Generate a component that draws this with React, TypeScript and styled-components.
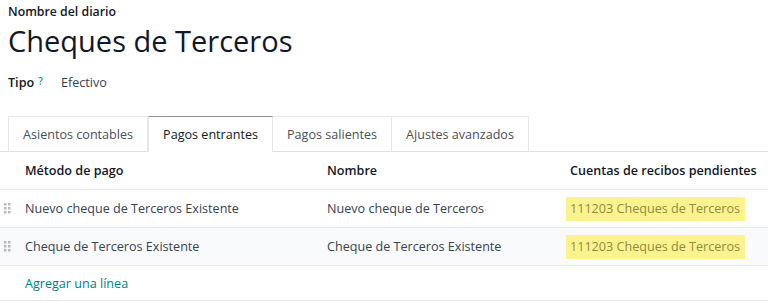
import React from "react";
import styled, { createGlobalStyle } from "styled-components";

const Global = createGlobalStyle`
  html, body { margin: 0; padding: 0; background: #fff; }
  body { font-family: "Open Sans", "Noto Sans", sans-serif; color: #212529; }
`;

const Page = styled.div`
  width: 768px;
  height: 302px;
  overflow: hidden;
  background: #fff;
`;

const Head = styled.div`
  padding: 0 8px;
`;

const FieldLabel = styled.div`
  font-size: 12.3px;
  font-weight: 600;
  color: #111827;
  padding-top: 3px;
  line-height: 18px;
`;

const Title = styled.h1`
  margin: 0;
  font-size: 29px;
  font-weight: 400;
  line-height: 40px;
  color: #111827;
`;

const InfoRow = styled.div`
  display: flex;
  align-items: baseline;
  margin-top: 13px;
  height: 28px;
  font-size: 12.6px;
`;

const InfoLabel = styled.span`
  font-weight: 600;
  color: #111827;
  width: 53px;
  display: inline-flex;
  align-items: flex-start;
`;

const Help = styled.sup`
  color: #0d8fb5;
  font-size: 10px;
  margin-left: 4px;
  font-weight: 600;
`;

const InfoValue = styled.span`
  color: #374151;
`;

const Tabs = styled.div`
  display: flex;
  padding: 0 8px;
  margin-top: 14px;
  border-bottom: 1px solid #dee2e6;
  height: 35px;
`;

const Tab = styled.div<{ $active?: boolean }>`
  display: flex;
  align-items: center;
  padding: 0 14px;
  font-size: 12.6px;
  color: ${(p) => (p.$active ? "#111827" : "#495057")};
  border: 1px solid #e5e7eb;
  border-left-width: ${(p) => (p.$active ? "1px" : "0")};
  border-top-color: ${(p) => (p.$active ? "#9d8598" : "#e5e7eb")};
  border-bottom: none;
  margin-bottom: ${(p) => (p.$active ? "-1px" : "0")};
  background: #fff;
  &:first-child { border-left-width: 1px; }
`;

const Row = styled.div<{ $alt?: boolean; $head?: boolean; $short?: boolean }>`
  display: grid;
  grid-template-columns: 21px 302px 243px 1fr;
  align-items: center;
  height: ${(p) => (p.$short ? "34px" : "37px")};
  border-bottom: 1px solid #e5e7eb;
  background: ${(p) => (p.$alt ? "#f9fafb" : "#fff")};
  font-size: 12.6px;
  font-weight: ${(p) => (p.$head ? 600 : 400)};
  color: ${(p) => (p.$head ? "#111827" : "#374151")};
`;

const Cell = styled.div<{ $pad?: number }>`
  padding-left: ${(p) => p.$pad ?? 4}px;
  white-space: nowrap;
`;

const Handle = styled.div`
  display: flex;
  justify-content: flex-start;
  padding-left: 4px;
`;

const Mark = styled.span`
  background: #fdf38e;
  color: #8e8b43;
  padding: 0 5px 0 4px;
  line-height: 24px;
  height: 24px;
  display: inline-block;
`;

const AddLink = styled.span`
  color: #017e84;
`;

const Grip = () => (
  <svg width="7" height="11" viewBox="0 0 7 11">
    {[0, 4, 8].map((y) =>
      [0, 4].map((x) => (
        <rect key={`${x}-${y}`} x={x} y={y} width="2.5" height="2.5" fill="#b5b9be" />
      ))
    )}
  </svg>
);

const rows = [
  { m: "Nuevo cheque de Terceros Existente", n: "Nuevo cheque de Terceros", c: "111203 Cheques de Terceros" },
  { m: "Cheque de Terceros Existente", n: "Cheque de Terceros Existente", c: "111203 Cheques de Terceros" },
];

export default function App() {
  return (
    <Page>
      <Global />
      <Head>
        <FieldLabel>Nombre del diario</FieldLabel>
        <Title>Cheques de Terceros</Title>
        <InfoRow>
          <InfoLabel>
            Tipo<Help>?</Help>
          </InfoLabel>
          <InfoValue>Efectivo</InfoValue>
        </InfoRow>
      </Head>
      <Tabs>
        <Tab>Asientos contables</Tab>
        <Tab $active>Pagos entrantes</Tab>
        <Tab>Pagos salientes</Tab>
        <Tab>Ajustes avanzados</Tab>
      </Tabs>
      <Row $head>
        <div />
        <Cell>Método de pago</Cell>
        <Cell>Nombre</Cell>
        <Cell>Cuentas de recibos pendientes</Cell>
      </Row>
      {rows.map((r, i) => (
        <Row key={i} $alt={i % 2 === 1}>
          <Handle>
            <Grip />
          </Handle>
          <Cell>{r.m}</Cell>
          <Cell>{r.n}</Cell>
          <Cell $pad={0}>
            <Mark>{r.c}</Mark>
          </Cell>
        </Row>
      ))}
      <Row $short>
        <div />
        <Cell>
          <AddLink>Agregar una línea</AddLink>
        </Cell>
        <div />
        <div />
      </Row>
    </Page>
  );
}
